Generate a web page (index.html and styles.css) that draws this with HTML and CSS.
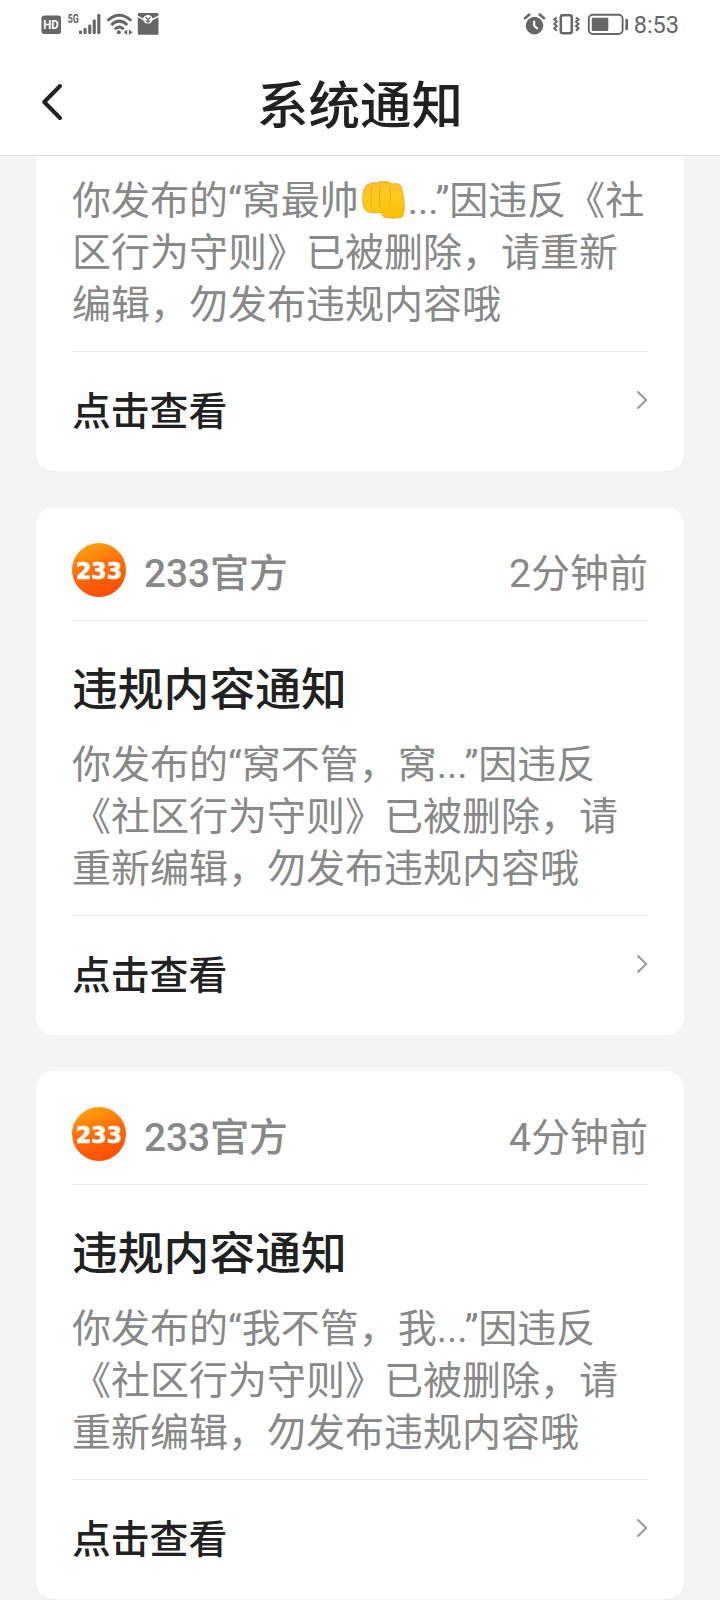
FILE: index.html
```html
<!DOCTYPE html>
<html lang="zh-CN">
<head>
<meta charset="utf-8">
<title>系统通知</title>
<link rel="stylesheet" href="styles.css">
</head>
<body>
<svg class="defs" width="0" height="0" aria-hidden="true">
  <defs>
    <linearGradient id="orange" x1="0.15" y1="0" x2="0.5" y2="1">
      <stop offset="0" stop-color="#ffa80f"/>
      <stop offset="0.55" stop-color="#ff6a08"/>
      <stop offset="1" stop-color="#ff4e04"/>
    </linearGradient>
    <linearGradient id="skin" x1="0" y1="0" x2="0.3" y2="1">
      <stop offset="0" stop-color="#fbbc2d"/>
      <stop offset="0.5" stop-color="#fdca20"/>
      <stop offset="1" stop-color="#ffc107"/>
    </linearGradient>
  </defs>
  <symbol id="chevron" viewBox="0 0 14 20">
    <path d="M3.500 1.500 L12.200 10 L3.500 18.500" fill="none" stroke="#999" stroke-width="2"/>
  </symbol>
</svg>
<div class="screen">
  <header class="top">
    <div class="status">
      <svg width="120" height="26" viewBox="40 11 120 26" fill="#666">
        <path fill-rule="evenodd" d="M44 15.500h14.500q2.500 0 2.500 2.500v13.500q0 2.500-2.500 2.500h-14.500q-2.500 0-2.500-2.500v-13.500q0-2.500 2.500-2.500z"/>
        <text class="hd" x="43.300" y="29.400" textLength="15.500" lengthAdjust="spacingAndGlyphs">HD</text>
        <text class="net" x="67.800" y="23.300" textLength="11" lengthAdjust="spacingAndGlyphs">5G</text>
        <rect x="79" y="30.500" width="3" height="3.500" rx="1"/>
        <rect x="83.500" y="28" width="3.100" height="6" rx="1"/>
        <rect x="88.200" y="24.500" width="3.100" height="9.500" rx="1"/>
        <rect x="92.700" y="19.500" width="3.100" height="14.500" rx="1"/>
        <rect x="97.200" y="14" width="3.200" height="20" rx="1"/>
        <g fill="none" stroke="#666" stroke-width="2.900">
          <path d="M107.500 20.800 Q119.300 9.800 131.200 20.800"/>
          <path d="M111.300 25 Q119.300 17.300 127.300 25"/>
          <path d="M114.800 29.200 Q119.300 25 123.800 29.200"/>
        </g>
        <circle cx="118.800" cy="32.200" r="2"/>
        <path d="M127.200 29.500v5.500l-3.400-2.700zM128.900 29.500v5.500l3.600-2.700z"/>
        <path d="M139 13h18.500q1 0 1 1v1.500l-5.800 3a5 5 0 0 0-9.600 0l-5.300-3v-1.500q0-1 1.200-1z"/>
        <path d="M137.800 17.300l5.500 3a4.800 4.800 0 0 0 9.200 0l6-3v16.500q0 1-1 1h-18.500q-1.200 0-1.200-1z"/>
        <path d="M145.500 17l2.400 2.800 2.400-2.800M147.900 19.800v4M145.800 21.200h4.200" fill="none" stroke="#666" stroke-width="1.200"/>
      </svg>
      <div class="status-right">
        <svg width="106" height="26" viewBox="523 11 106 26" fill="none" stroke="#666">
          <circle cx="534.500" cy="25.600" r="8.800" fill="#666" stroke="none"/>
          <path d="M525 18.200l4.400-3.600M544 18.200l-4.400-3.600" stroke-width="2.600" stroke-linecap="round"/>
          <path d="M534.200 20.800v5l3.500 3.200" stroke="#fff" stroke-width="2"/>
          <rect x="560.800" y="15.200" width="11" height="18" rx="2" stroke-width="2.500"/>
          <path d="M556.800 17.500l-2.500 2 2.500 2-2.500 2.400 2.500 2.200-2.500 2.200 2.500 2.500M576 17.500l2.500 2-2.500 2 2.500 2.400-2.500 2.200 2.500 2.200-2.500 2.500" stroke-width="2"/>
          <rect x="588.800" y="14.800" width="33.800" height="19.200" rx="4" stroke-width="1.900"/>
          <rect x="591.800" y="17.800" width="16.500" height="13.200" rx="1" fill="#666" stroke="none"/>
          <path d="M626.700 20v9" stroke-width="2.600" stroke-linecap="round"/>
        </svg>
        <span class="clock">8:53</span>
      </div>
    </div>
    <div class="navbar">
      <svg class="back" width="24" height="38" viewBox="0 0 24 38"><path d="M20 3L4.200 19L20 35" fill="none" stroke="#222" stroke-width="4" stroke-linecap="round" stroke-linejoin="round"/></svg>
      <h1>系统通知</h1>
    </div>
  </header>
  <main class="list">
    <article class="card first">
      <p class="body">你发布的“窝最帅<svg class="fist" role="img" aria-label="拳头" width="49" height="40" viewBox="0 0 49 40"><path d="M5 9Q6.500 4.500 10.500 4Q13.500 1.500 18 3Q21 .8 25.500 1.500Q30 1 33 4Q39 2.500 42 6Q45 16 45.300 25Q45.500 35 42.500 37.500Q33.500 39 26 37.500Q23 36.500 22.500 32.500Q8.500 34 6 29.500Q3.500 26 3.700 18Q4 12 5 9Z" fill="url(#skin)" stroke="#eda318" stroke-width=".8"/><path d="M12.800 7Q11 16 12.500 27M21 6.500Q19.500 16 21 28M31 7Q32 14 31 27" fill="none" stroke="#efab1c" stroke-width="1"/><path d="M22.500 32.500Q27 30.500 32 30.500Q38 31 40 26" fill="none" stroke="#f6b416" stroke-width=".8"/></svg>...”因违反《社<br>区行为守则》已被删除，请重新<br>编辑，勿发布违规内容哦</p>
      <div class="foot"><span>点击查看</span><svg class="arrow"><use href="#chevron"/></svg></div>
    </article>
    <article class="card">
      <div class="head"><svg class="avatar" viewBox="0 0 54 54"><circle cx="27" cy="27" r="27" fill="url(#orange)"/><text class="logo-text" x="4" y="35.500" textLength="46" lengthAdjust="spacingAndGlyphs">233</text></svg><span class="name">233官方</span><time>2分钟前</time></div>
      <h2>违规内容通知</h2>
      <p class="body">你发布的“窝不管，窝...”因违反<br>《社区行为守则》已被删除，请<br>重新编辑，勿发布违规内容哦</p>
      <div class="foot"><span>点击查看</span><svg class="arrow"><use href="#chevron"/></svg></div>
    </article>
    <article class="card">
      <div class="head"><svg class="avatar" viewBox="0 0 54 54"><circle cx="27" cy="27" r="27" fill="url(#orange)"/><text class="logo-text" x="4" y="35.500" textLength="46" lengthAdjust="spacingAndGlyphs">233</text></svg><span class="name">233官方</span><time>4分钟前</time></div>
      <h2>违规内容通知</h2>
      <p class="body">你发布的“我不管，我...”因违反<br>《社区行为守则》已被删除，请<br>重新编辑，勿发布违规内容哦</p>
      <div class="foot"><span>点击查看</span><svg class="arrow"><use href="#chevron"/></svg></div>
    </article>
  </main>
</div>
</body>
</html>
```
FILE: styles.css
```css
* {
  box-sizing: border-box;
}

body {
  margin: 0;
  background: #f4f4f4;
  font-family: Roboto, "Noto Sans CJK SC", sans-serif;
  color: #212121;
}

h1, h2, p {
  margin: 0;
  font-weight: 500;
}

svg {
  display: block;
  flex: none;
}

.defs {
  position: absolute;
}

.screen {
  width: 720px;
  height: 1600px;
  overflow: hidden;
}

.top {
  height: 156px;
  background: #fff;
  border-bottom: 1px solid #dedede;
}

.status {
  display: flex;
  justify-content: space-between;
  height: 48px;
  padding: 11px 41px 0 40px;
}

.status-right {
  display: flex;
  gap: 5px;
}

.clock {
  font-size: 23.5px;
  line-height: 28px;
  color: #666;
}

.hd {
  font: 700 12.5px Roboto, sans-serif;
  fill: #fff;
}

.net {
  font: 700 12.5px Roboto, sans-serif;
}

.navbar {
  display: grid;
  grid-template-columns: 100px 1fr 100px;
  padding-top: 26px;
}

.back {
  margin: 9px 0 0 40px;
}

h1 {
  font-size: 51.5px;
  line-height: 66px;
  text-align: center;
}

.list {
  display: flex;
  flex-direction: column;
  gap: 36px;
  padding: 0 36px;
}

.card {
  flex: none;
  display: flex;
  flex-direction: column;
  height: 528px;
  padding: 36px 36px 0;
  border-radius: 18px;
  background: #fff;
}

.card.first {
  height: 315px;
  padding-top: 19px;
  border-radius: 0 0 18px 18px;
}

.head {
  display: flex;
  height: 78px;
  border-bottom: 1px solid #ebebeb;
  font-size: 39px;
  line-height: 62px;
  color: #888;
}

.avatar {
  width: 54px;
  height: 54px;
}

.logo-text {
  font: 700 23.5px "DejaVu Sans", sans-serif;
  fill: #fff;
  stroke: #fff;
  stroke-width: 0.6px;
}

.name {
  flex: 1;
  margin-left: 18px;
  font-size: 38.8px;
  font-weight: 500;
}

h2 {
  margin-top: 40px;
  font-size: 45.8px;
  line-height: 60px;
}

.body {
  margin-top: 18px;
  font-size: 39px;
  font-weight: 400;
  line-height: 52px;
  color: #888;
  white-space: nowrap;
}

.card.first .body {
  margin-top: 0;
}

.fist {
  display: inline-block;
  height: 40px;
  vertical-align: -6px;
}

.foot {
  display: flex;
  justify-content: space-between;
  height: 120px;
  margin-top: 20px;
  border-top: 1px solid #ebebeb;
  font-size: 38.8px;
  font-weight: 500;
  line-height: 120px;
}

.arrow {
  width: 14px;
  height: 20px;
  margin-top: 38px;
}
```
